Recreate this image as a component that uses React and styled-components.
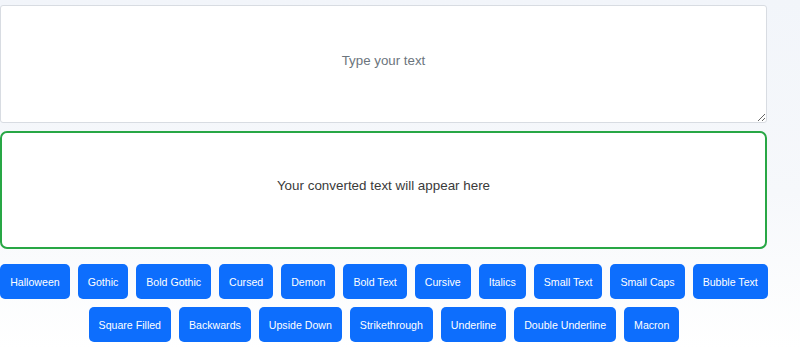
import React from 'react'
import styled, { createGlobalStyle } from 'styled-components'

const GlobalStyle = createGlobalStyle`
  html, body {
    margin: 0;
    padding: 0;
    height: 100%;
  }
  body {
    font-family: "Liberation Sans", Arial, Helvetica, sans-serif;
    background: linear-gradient(180deg, #f2f5fa 0%, #f6f8fb 55%, #ffffff 100%);
    overflow: hidden;
  }
`

const Page = styled.main`
  width: 767px;
  padding-top: 5px;
  display: flex;
  flex-direction: column;
  gap: 8px;
`

const InputArea = styled.textarea`
  box-sizing: border-box;
  width: 767px;
  height: 118px;
  margin: 0;
  padding: 47px 12px 12px;
  border: 1px solid #d8dce2;
  border-radius: 3px;
  background: #fff;
  font-family: "Liberation Sans", Arial, Helvetica, sans-serif;
  font-size: 13.3px;
  color: #333;
  text-align: center;
  resize: vertical;
  outline: none;

  &::placeholder {
    color: #6c757d;
  }
`

const OutputBox = styled.div`
  box-sizing: border-box;
  width: 767px;
  height: 118px;
  border: 2px solid #28a745;
  border-radius: 7px;
  background: #fff;
  display: flex;
  align-items: center;
  justify-content: center;
  font-size: 13.4px;
  color: #3a3a3a;
  padding-bottom: 10px;
`

const ButtonGrid = styled.div`
  display: flex;
  flex-wrap: wrap;
  justify-content: center;
  gap: 8px 8px;
  margin: 7px 0 0 -3px;
  width: 774px;
`

const StyleButton = styled.button`
  height: 35px;
  padding: 0 10px;
  border: none;
  border-radius: 5px;
  background: #0d6efd;
  color: #fff;
  font-family: "Liberation Sans", Arial, Helvetica, sans-serif;
  font-size: 10.6px;
  cursor: pointer;
`

const styles = [
  'Halloween',
  'Gothic',
  'Bold Gothic',
  'Cursed',
  'Demon',
  'Bold Text',
  'Cursive',
  'Italics',
  'Small Text',
  'Small Caps',
  'Bubble Text',
  'Square Filled',
  'Backwards',
  'Upside Down',
  'Strikethrough',
  'Underline',
  'Double Underline',
  'Macron',
]

export default function App() {
  return (
    <React.Fragment>
      <GlobalStyle />
      <Page>
        <InputArea placeholder="Type your text" />
        <OutputBox>Your converted text will appear here</OutputBox>
        <ButtonGrid>
          {styles.map((name) => (
            <StyleButton key={name}>{name}</StyleButton>
          ))}
        </ButtonGrid>
      </Page>
    </React.Fragment>
  )
}
